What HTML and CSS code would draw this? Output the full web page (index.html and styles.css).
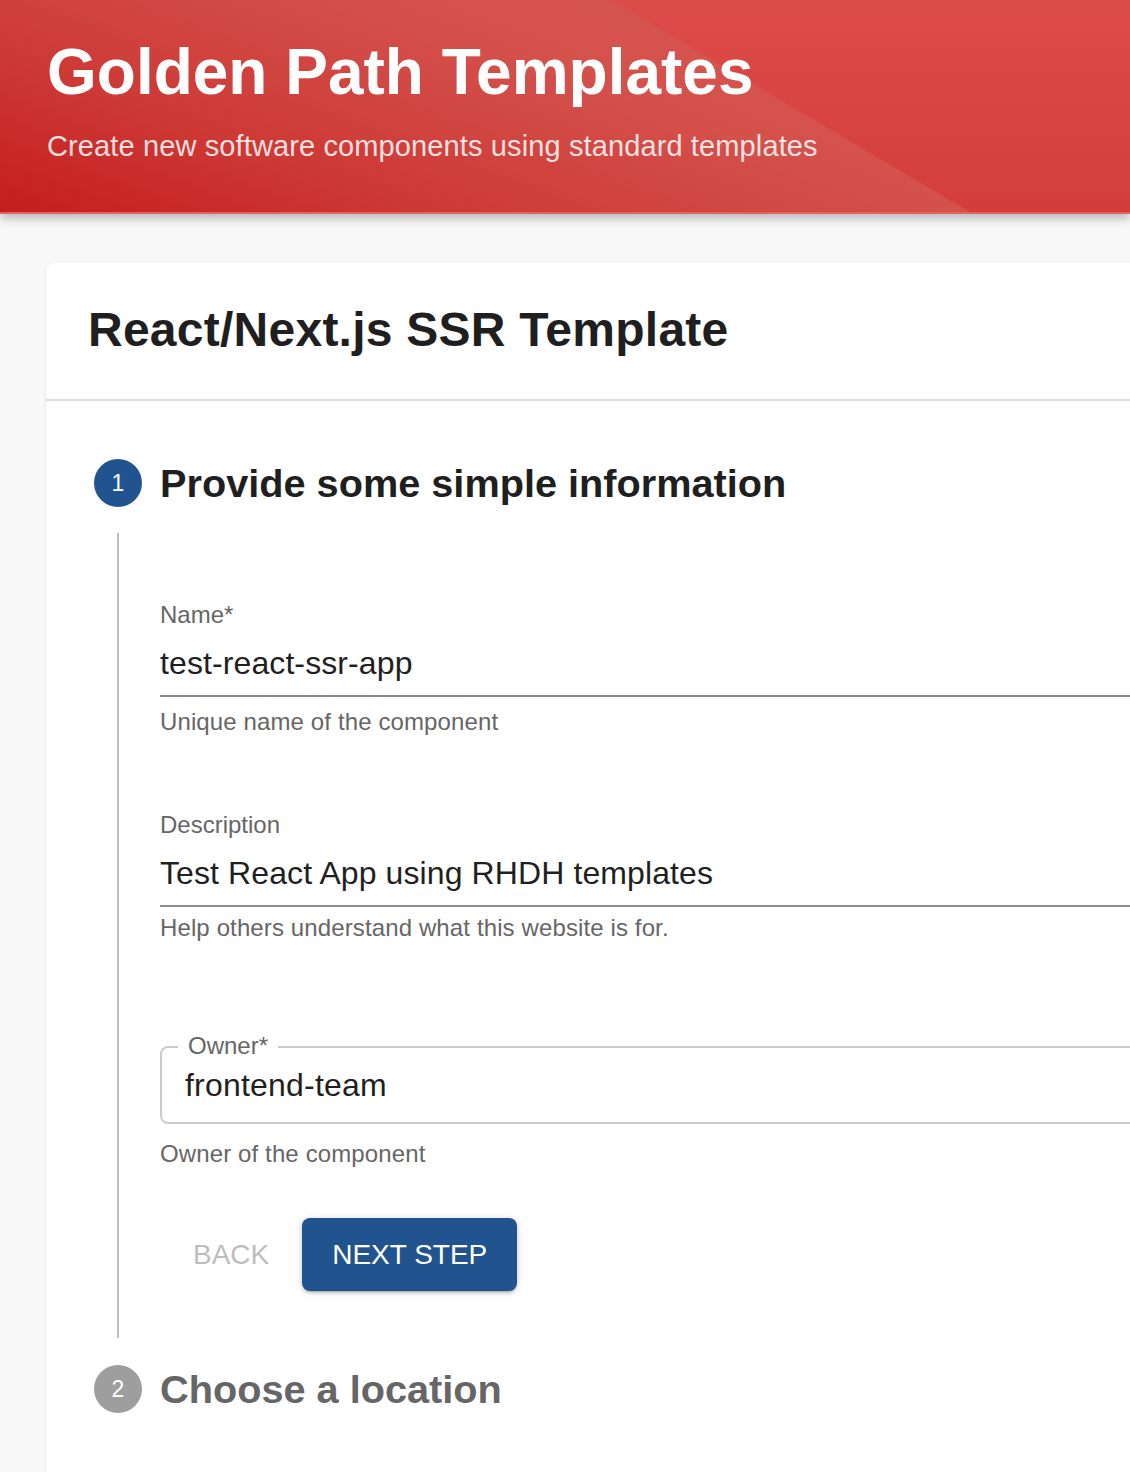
FILE: index.html
```html
<!DOCTYPE html>
<html lang="en">
<head>
<meta charset="utf-8">
<title>Golden Path Templates</title>
<link rel="stylesheet" href="styles.css">
</head>
<body>
<header class="hero">
  <div class="hero-shape"></div>
  <h1 class="hero-title">Golden Path Templates</h1>
  <p class="hero-sub">Create new software components using standard templates</p>
</header>
<main class="main">
  <section class="card">
    <div class="card-head">
      <h2 class="card-title">React/Next.js SSR Template</h2>
    </div>
    <div class="card-body">
      <div class="step-head">
        <span class="step-icon active">1</span>
        <span class="step-title">Provide some simple information</span>
      </div>
      <div class="step-content">
        <div class="field field-name">
          <div class="field-label">Name*</div>
          <div class="field-input">test-react-ssr-app</div>
          <div class="field-helper">Unique name of the component</div>
        </div>
        <div class="field field-desc">
          <div class="field-label">Description</div>
          <div class="field-input">Test React App using RHDH templates</div>
          <div class="field-helper helper-tight">Help others understand what this website is for.</div>
        </div>
        <div class="field field-owner">
          <div class="outlined">
            <span class="outlined-label">Owner*</span>
            <div class="outlined-value">frontend-team</div>
          </div>
          <div class="field-helper helper-owner">Owner of the component</div>
        </div>
        <div class="actions">
          <button class="btn btn-text" disabled>BACK</button>
          <button class="btn btn-primary">NEXT STEP</button>
        </div>
      </div>
      <div class="step-head step-two">
        <span class="step-icon inactive">2</span>
        <span class="step-title muted">Choose a location</span>
      </div>
    </div>
  </section>
</main>
</body>
</html>
```

FILE: styles.css
```css
html, body {
  margin: 0;
  padding: 0;
  overflow: hidden;
}
body {
  background: #f8f8f8;
  font-family: "Liberation Sans", Arial, sans-serif;
  color: #212121;
  width: 1130px;
  height: 1472px;
}

.hero {
  position: relative;
  height: 214px;
  padding: 40px 47px 0;
  box-sizing: border-box;
  background: linear-gradient(20deg, #c41d1d 0%, #cd3935 25%, #d4504b 55%, #d95b56 100%);
  border-bottom: 2px solid #e26360;
  box-shadow: 0 4px 10px rgba(0, 0, 0, 0.28);
  overflow: hidden;
  z-index: 2;
}
.hero-shape {
  position: absolute;
  inset: 0;
  background: linear-gradient(180deg, #dc4c49 0%, #d33e3a 100%);
  clip-path: polygon(611px 0, 100% 0, 100% 100%, 970px 100%);
}
.hero-title {
  position: relative;
  margin: 0;
  font-size: 64px;
  line-height: 64px;
  font-weight: 700;
  color: #ffffff;
}
.hero-sub {
  position: relative;
  margin: 28px 0 0;
  font-size: 29px;
  line-height: 29px;
  letter-spacing: 0.12px;
  color: rgba(255, 255, 255, 0.85);
}

.main {
  padding: 49px 0 0 46px;
}
.card {
  width: 1200px;
  background: #ffffff;
  border-radius: 8px 0 0 0;
  box-shadow: 0 1px 3px rgba(0, 0, 0, 0.12);
  min-height: 1300px;
}
.card-head {
  padding: 43px 42px 45px;
  border-bottom: 2px solid #dedede;
}
.card-title {
  margin: 0;
  font-size: 48px;
  line-height: 48px;
  font-weight: 700;
  letter-spacing: 0.25px;
  color: #1f1f1f;
}

.card-body {
  padding: 58px 0 0 48px;
}
.step-head {
  display: flex;
  align-items: center;
  height: 48px;
}
.step-icon {
  width: 48px;
  height: 48px;
  border-radius: 50%;
  display: flex;
  align-items: center;
  justify-content: center;
  color: #ffffff;
  font-size: 23px;
  margin-right: 18px;
  flex: none;
}
.step-icon.active { background: #21548f; }
.step-icon.inactive { background: #9e9e9e; }
.step-title {
  font-size: 39.7px;
  line-height: 48px;
  font-weight: 700;
  color: #1f1f1f;
}
.step-title.muted { color: #666666; }

.step-content {
  margin: 26px 0 0 23px;
  border-left: 2px solid #bdbdbd;
  padding: 70px 0 47px 41px;
}

.field-label {
  font-size: 24px;
  line-height: 24px;
  color: #666666;
}
.field-input {
  margin-top: 20px;
  padding-bottom: 16px;
  font-size: 32px;
  line-height: 32px;
  letter-spacing: 0.1px;
  color: #1f1f1f;
  border-bottom: 2px solid #8a8a8a;
}
.field-helper {
  margin-top: 13px;
  font-size: 24px;
  line-height: 24px;
  letter-spacing: 0.12px;
  color: #666666;
}
.field-desc { margin-top: 79px; }
.field-helper.helper-tight { margin-top: 9px; }

.field-owner { margin-top: 106px; }
.outlined {
  position: relative;
  border: 2px solid #cccccc;
  border-radius: 8px 0 0 8px;
  padding: 21px 23px;
}
.outlined-label {
  position: absolute;
  top: -15px;
  left: 16px;
  padding: 0 10px;
  background: #ffffff;
  font-size: 24px;
  line-height: 26px;
  color: #666666;
}
.outlined-value {
  font-size: 32px;
  line-height: 32px;
  letter-spacing: 0.2px;
  color: #1f1f1f;
}
.field-helper.helper-owner { margin-top: 18px; }

.actions {
  display: flex;
  align-items: center;
  gap: 17px;
  margin-top: 52px;
  margin-left: 17px;
}
.btn {
  font-family: "Liberation Sans", Arial, sans-serif;
  font-size: 28px;
  line-height: 28px;
  border: none;
  background: none;
  cursor: pointer;
}
.btn-text {
  color: #bdbdbd;
  padding: 22px 16px;
  height: 73px;
}
.btn-primary {
  width: 215px;
  height: 73px;
  padding: 0;
  color: #ffffff;
  background: #21548f;
  border-radius: 8px;
  box-shadow: 0 3px 2px -2px rgba(0, 0, 0, 0.2), 0 2px 4px rgba(0, 0, 0, 0.14), 0 1px 10px rgba(0, 0, 0, 0.12);
}

.step-two { margin-top: 27px; }
```
